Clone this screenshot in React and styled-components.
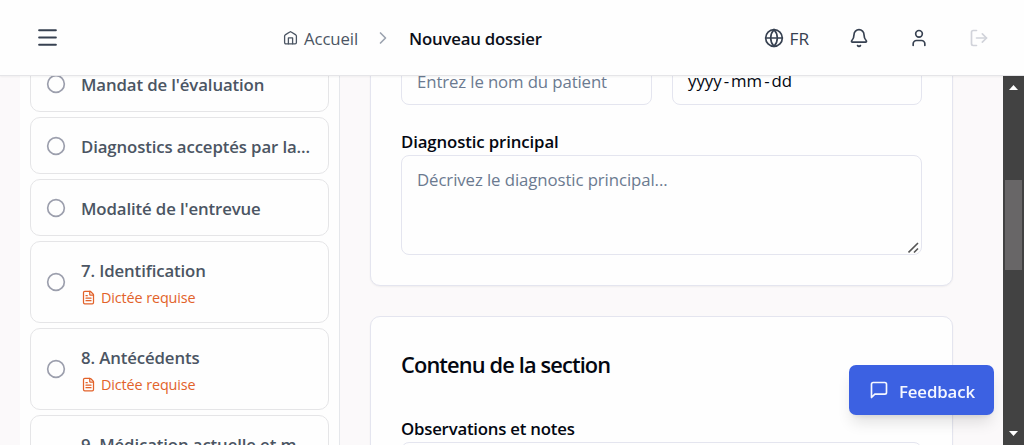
import React from "react";
import styled, { createGlobalStyle } from "styled-components";
import { Bell, ChevronRight, Circle, FileText, Globe, LogOut, Menu, User } from "lucide-react";

const GlobalStyle = createGlobalStyle`
  * { box-sizing: border-box; }
  body {
    margin: 0;
    overflow: hidden;
    font-family: "Open Sans", "Noto Sans", sans-serif;
    font-size: 16.8px;
    color: #030711;
  }
`;

const Page = styled.div`
  display: flex;
  flex-direction: column;
  width: 1024px;
  height: 445px;
  overflow: hidden;
  background: #fbf9fa;
`;

const Header = styled.header`
  position: relative;
  z-index: 2;
  flex: none;
  display: flex;
  align-items: center;
  height: 76px;
  padding: 0 35px;
  background: #fefefe;
  border-bottom: 1px solid #e5e5e8;
  box-shadow: 0 1px 2px rgba(0, 0, 0, 0.05);
  color: #374151;
  svg { display: block; flex: none; }
`;

const Breadcrumb = styled.nav`
  display: flex;
  align-items: center;
  margin-left: 223px;
  color: #4b5563;
`;

const Text = styled.span`
  white-space: pre;
  letter-spacing: ${(p) => p.$spacing ?? -0.12}px;
`;

const Crumb = styled(Text)`
  margin-left: 6px;
  padding-top: 1px;
`;

const CurrentCrumb = styled(Text)`
  padding-top: 1px;
  font-weight: 600;
  color: #0b0f19;
`;

const Separator = styled(ChevronRight)`
  margin: 0 16px 0 15px;
  color: #9ca3af;
`;

const Actions = styled.div`
  display: flex;
  align-items: center;
  gap: 40px;
  margin-left: auto;
`;

const Language = styled.div`
  display: flex;
  align-items: center;
  gap: 6px;
  font-size: 17.2px;
  font-weight: 500;
`;

const LanguageCode = styled(Text)`
  padding-top: 1px;
`;

const Body = styled.div`
  flex: 1;
  min-height: 0;
  display: flex;
  overflow: hidden;
`;

const Sidebar = styled.aside`
  width: 320px;
  margin-left: 20px;
  padding: 0 10px;
  background: #fefefe;
  border-right: 1px solid #e5e7eb;
`;

const SectionList = styled.div`
  display: flex;
  flex-direction: column;
  gap: 5px;
  margin-top: -21px;
`;

const SectionItem = styled.div`
  flex: none;
  display: flex;
  align-items: center;
  gap: 15px;
  height: ${(p) => (p.$tall ? 82 : 57)}px;
  padding: 0 15px;
  border: 1px solid #e5e5e7;
  border-radius: 10px;
  color: #9c9fad;
  svg { flex: none; }
`;

const SectionText = styled.div`
  display: flex;
  flex-direction: column;
  min-width: 0;
  padding-top: ${(p) => (p.$tall ? 1 : 2)}px;
`;

const SectionTitle = styled(Text)`
  line-height: 25px;
  font-weight: 600;
  color: #4b5563;
`;

const Dictation = styled.div`
  display: flex;
  align-items: center;
  gap: 5px;
  margin-top: 5px;
  font-size: 14.4px;
  line-height: 20px;
  color: #e2622a;
`;

const Main = styled.main`
  flex: 1;
  display: flex;
  flex-direction: column;
  gap: 30px;
  padding: 0 50px 0 30px;
`;

const Card = styled.section`
  flex: none;
  display: flex;
  flex-direction: column;
  height: ${(p) => p.$height}px;
  padding: 0 30px;
  background: #fefefe;
  border: 1px solid #e4e5ef;
  border-radius: 10px;
  box-shadow: 0 1px 2px rgba(0, 0, 0, 0.05);
`;

const PatientCard = styled(Card)`
  margin-top: -61px;
  padding-top: 39px;
`;

const FieldRow = styled.div`
  display: grid;
  grid-template-columns: 251px 250px;
  gap: 20px;
`;

const Field = styled.div`
  display: flex;
  align-items: center;
  height: 50px;
  padding: ${(p) => (p.$filled ? 0 : 2)}px 15px 0;
  border: 1px solid #e4e5ef;
  border-radius: 8px;
  color: ${(p) => (p.$filled ? "#030711" : "#6b7a90")};
`;

const DateDash = styled.span`
  margin: 0 2px;
`;

const Label = styled(Text)`
  font-weight: 600;
  line-height: 24px;
  margin-top: ${(p) => p.$top}px;
`;

const TextArea = styled.div`
  display: flex;
  justify-content: space-between;
  height: 100px;
  margin-top: 1px;
  padding: 11px 2px 0 15px;
  border: 1px solid #e4e5ef;
  border-radius: 8px;
  line-height: 25px;
  color: #6b7a90;
`;

const Grip = styled.svg`
  align-self: flex-end;
`;

const CardTitle = styled(Text)`
  margin-top: 32px;
  font-size: 21.8px;
  line-height: 32px;
  font-weight: 600;
`;

const Scrollbar = styled.div`
  flex: none;
  display: flex;
  flex-direction: column;
  align-items: center;
  justify-content: space-between;
  width: 21px;
  padding: 9px 0 9px;
  background: #424242;
`;

const Thumb = styled.div`
  width: 17px;
  height: 90px;
  margin: 0 0 71px;
  background: #686667;
`;

const FeedbackButton = styled.button`
  position: fixed;
  left: 849px;
  top: 365px;
  z-index: 3;
  display: flex;
  align-items: center;
  gap: 10px;
  width: 145px;
  height: 50px;
  padding: 0 20px;
  border: 0;
  border-radius: 7px;
  background: #3c61e2;
  color: #f5f7ff;
  font: 600 16.8px "Open Sans", "Noto Sans", sans-serif;
  box-shadow: 0 10px 15px -3px rgba(0, 0, 0, 0.12), 0 4px 6px -4px rgba(0, 0, 0, 0.12);
  svg { flex: none; }
`;

const FeedbackLabel = styled(Text)`
  padding-top: 2px;
`;

const sections = [
  { title: "Mandat de l'évaluation" },
  { title: "Diagnostics acceptés par la..." },
  { title: "Modalité de l'entrevue" },
  { title: "7. Identification", dictation: true },
  { title: "8. Antécédents", dictation: true },
  { title: "9. Médication actuelle et m...", dictation: true },
];

function HomeIcon() {
  return (
    <svg width="15" height="15" viewBox="0 0 15 15" fill="none" stroke="currentColor" strokeWidth="1.3" strokeLinecap="round" strokeLinejoin="round">
      <path d="M1.6 6.1c0-.5.2-.9.6-1.2L6.8 2c.5-.4.9-.4 1.4 0l4.6 2.9c.4.3.6.7.6 1.2v6.4c0 .8-.5 1.3-1.3 1.3H2.9c-.8 0-1.3-.5-1.3-1.3z" />
      <path d="M5.4 13.8V7.9h4.2v5.9" />
    </svg>
  );
}

function Section({ title, dictation }) {
  return (
    <SectionItem $tall={dictation}>
      <Circle size={20} />
      <SectionText $tall={dictation}>
        <SectionTitle>{title}</SectionTitle>
        {dictation && (
          <Dictation>
            <FileText size={15} />
            <Text>Dictée requise</Text>
          </Dictation>
        )}
      </SectionText>
    </SectionItem>
  );
}

export default function App() {
  return (
    <Page>
      <GlobalStyle />
      <Header>
        <Menu size={25} />
        <Breadcrumb>
          <HomeIcon />
          <Crumb>Accueil</Crumb>
          <Separator size={20} />
          <CurrentCrumb $spacing={-0.22}>Nouveau dossier</CurrentCrumb>
        </Breadcrumb>
        <Actions>
          <Language>
            <Globe size={20} />
            <LanguageCode $spacing={0}>FR</LanguageCode>
          </Language>
          <Bell size={20} />
          <User size={20} />
          <LogOut size={20} color="#d1d3da" />
        </Actions>
      </Header>
      <Body>
        <Sidebar>
          <SectionList>
            {sections.map((s) => (
              <Section key={s.title} {...s} />
            ))}
          </SectionList>
        </Sidebar>
        <Main>
          <PatientCard $height={271}>
            <FieldRow>
              <Field><Text>Entrez le nom du patient</Text></Field>
              <Field $filled>
                <Text $spacing={0}>yyyy<DateDash>-</DateDash>mm<DateDash>-</DateDash>dd</Text>
              </Field>
            </FieldRow>
            <Label $top={25}>Diagnostic principal</Label>
            <TextArea>
              <Text $spacing={-0.09}>Décrivez le diagnostic principal...</Text>
              <Grip width="11" height="12" viewBox="0 0 11 12" fill="none" stroke="#555" strokeWidth="1.6">
                <path d="M0.5 10.5 10 1M6 10.5 10 6.5" />
              </Grip>
            </TextArea>
          </PatientCard>
          <Card $height={300}>
            <CardTitle $spacing={-0.87}>Contenu de la section</CardTitle>
            <Label $top={36} $spacing={-0.22}>Observations et notes</Label>
            <TextArea />
          </Card>
        </Main>
        <Scrollbar>
          <svg width="9" height="5"><path d="M0 5 4.5 0 9 5Z" fill="#fff" /></svg>
          <Thumb />
          <svg width="9" height="5"><path d="M0 0 4.5 5 9 0Z" fill="#fff" /></svg>
        </Scrollbar>
      </Body>
      <FeedbackButton>
        <svg width="20" height="20" viewBox="0 0 24 24" fill="none" stroke="currentColor" strokeWidth="2" strokeLinecap="round" strokeLinejoin="round">
          <path d="M21 15a2 2 0 0 1-2 2H7l-4 4V5a2 2 0 0 1 2-2h14a2 2 0 0 1 2 2z" />
        </svg>
        <FeedbackLabel>Feedback</FeedbackLabel>
      </FeedbackButton>
    </Page>
  );
}
